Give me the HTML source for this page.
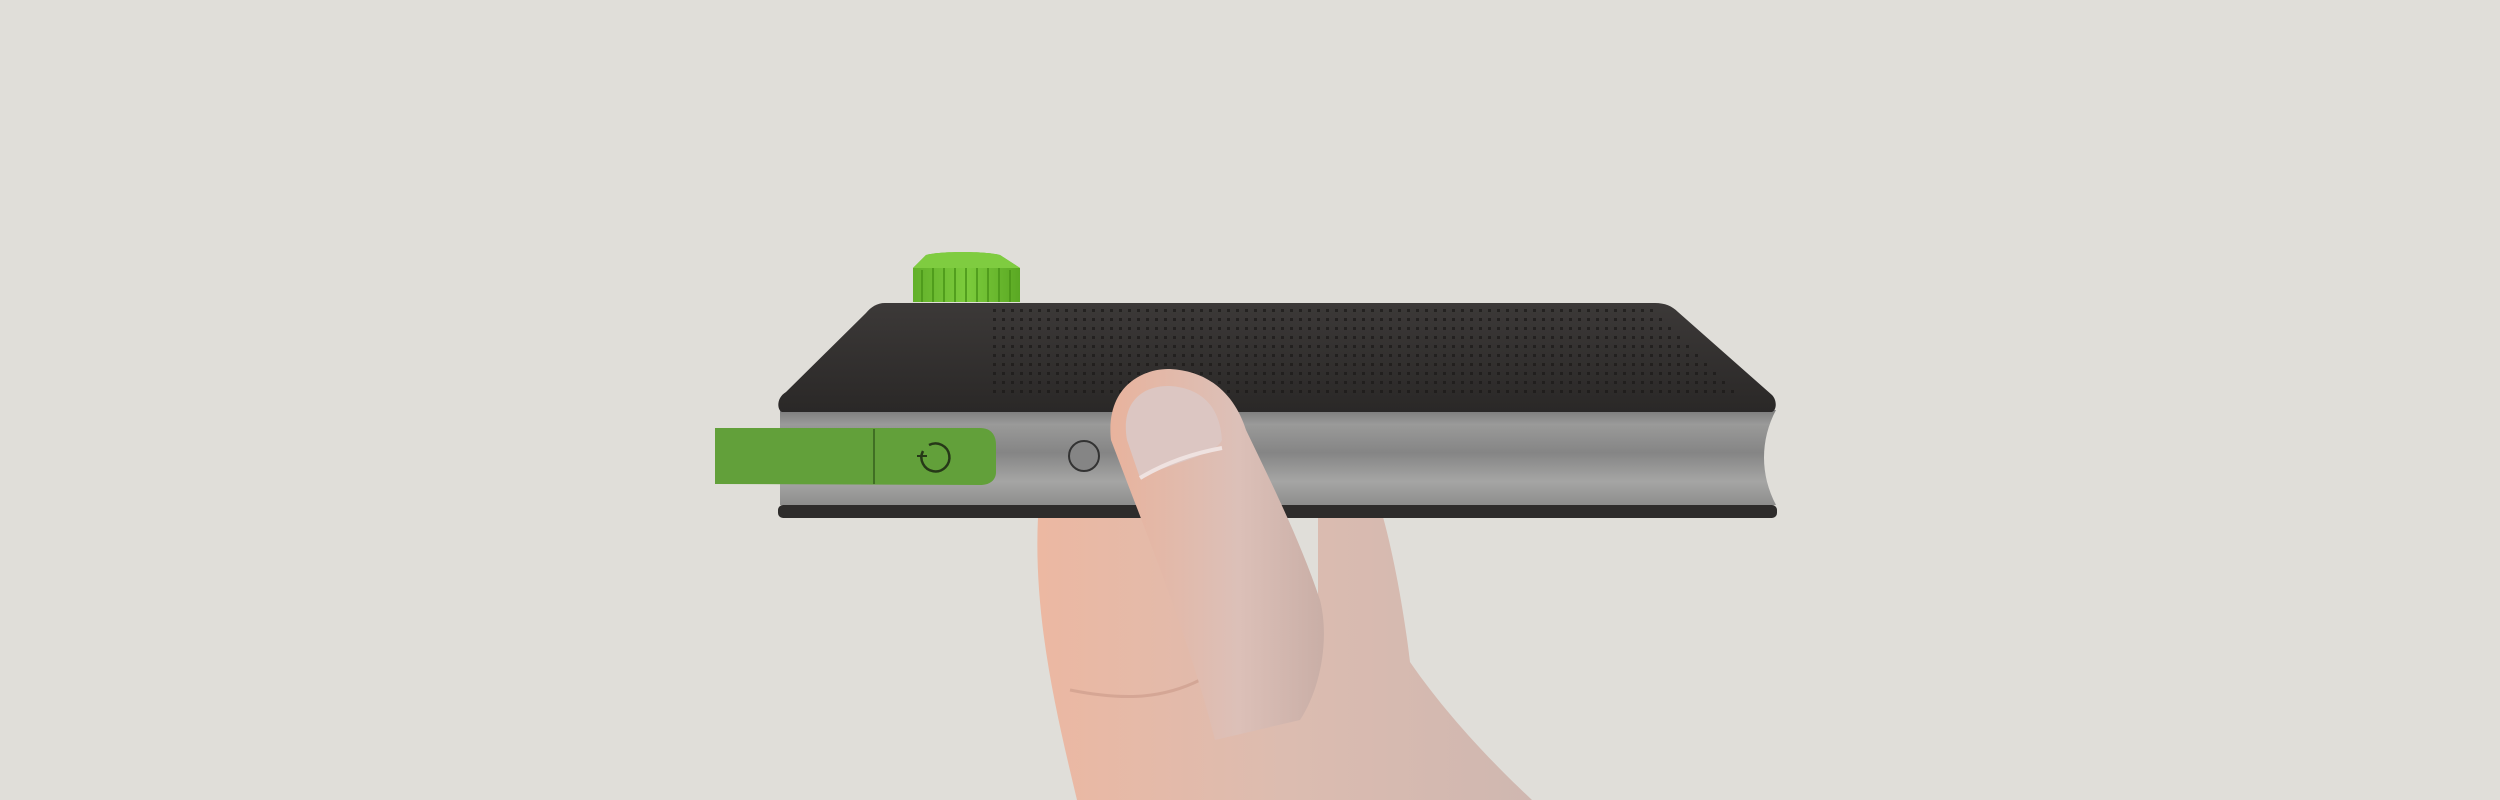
<!DOCTYPE html>
<html><head><meta charset="utf-8"><style>
html,body{margin:0;padding:0;background:#e0ded9;width:2500px;height:800px;overflow:hidden}
svg{display:block}
</style></head><body>
<svg width="2500" height="800" viewBox="0 0 2500 800" xmlns="http://www.w3.org/2000/svg">
<defs>
<linearGradient id="top" x1="0" y1="0" x2="0" y2="1">
<stop offset="0" stop-color="#3c3938"/><stop offset="1" stop-color="#2a2827"/></linearGradient>
<linearGradient id="silver" x1="0" y1="0" x2="0" y2="1">
<stop offset="0" stop-color="#7c7c7c"/><stop offset="0.15" stop-color="#9a9a99"/><stop offset="0.45" stop-color="#858585"/><stop offset="0.75" stop-color="#a5a5a4"/><stop offset="1" stop-color="#8e8e8d"/></linearGradient>
<linearGradient id="knob" x1="0" y1="0" x2="1" y2="0">
<stop offset="0" stop-color="#62b02a"/><stop offset="0.5" stop-color="#7ccc3c"/><stop offset="1" stop-color="#5aa823"/></linearGradient>
<linearGradient id="skin" x1="0" y1="0" x2="1" y2="0">
<stop offset="0" stop-color="#ecb8a2"/><stop offset="0.5" stop-color="#dcbcb0"/><stop offset="1" stop-color="#cfb7b0"/></linearGradient>
<linearGradient id="thumb" x1="0" y1="0" x2="1" y2="0">
<stop offset="0" stop-color="#e8b39d"/><stop offset="0.6" stop-color="#dcc0b8"/><stop offset="1" stop-color="#c9aea6"/></linearGradient>
<pattern id="dots" width="9" height="9" patternUnits="userSpaceOnUse">
<rect x="3" y="3" width="3" height="3" fill="#1c1a19"/></pattern>
<clipPath id="topclip"><path d="M990,306 L1650,306 L1740,395 L990,395 Z"/></clipPath>
</defs>
<path d="M1038,517 L1240,517 L1318,600 L1318,517 L1383,517 C1395,560 1405,620 1410,662 C1450,720 1500,770 1532,800 L1077,800 C1058,720 1033,620 1038,517 Z" fill="url(#skin)"/>
<path d="M1070,690 C1120,700 1160,700 1200,680" stroke="#c99a88" stroke-width="3" fill="none" opacity="0.6"/>
<path d="M913,302 L913,268 L926,255 C940,251 985,251 1000,255 L1020,268 L1020,302 Z" fill="url(#knob)"/>
<path d="M926,255 C940,251 985,251 1000,255 L1020,268 L913,268 Z" fill="#7fcc40"/>
<g stroke="#4a9618" stroke-width="2" opacity="0.8">
<line x1="922" y1="270" x2="922" y2="302"/><line x1="933" y1="268" x2="933" y2="302"/><line x1="944" y1="268" x2="944" y2="302"/><line x1="955" y1="268" x2="955" y2="302"/><line x1="966" y1="268" x2="966" y2="302"/><line x1="977" y1="268" x2="977" y2="302"/><line x1="988" y1="268" x2="988" y2="302"/><line x1="999" y1="268" x2="999" y2="302"/><line x1="1010" y1="270" x2="1010" y2="302"/></g>
<path d="M780,410 L1776,410 C1760,440 1760,475 1776,505 L780,505 Z" fill="url(#silver)"/>
<rect x="778" y="505" width="999" height="13" rx="5" fill="#2e2c2b"/>
<path d="M885,303 L1655,303 C1665,303 1672,306 1678,312 L1772,395 C1777,400 1777,410 1772,412 L782,412 C777,410 776,398 786,392 L866,313 C871,307 877,303 885,303 Z" fill="url(#top)"/>
<rect x="980" y="300" width="800" height="100" fill="url(#dots)" opacity="0.75" clip-path="url(#topclip)"/>
<path d="M715,428 L980,428 C991,428 996,435 996,445 L996,472 C996,480 990,485 980,485 L715,484 Z" fill="#62a03a"/>
<line x1="874" y1="429" x2="874" y2="484" stroke="#355f1c" stroke-width="1.5"/>
<path d="M923,451 A14,14 0 1 0 929,445" stroke="#263818" stroke-width="2.5" fill="none"/>
<line x1="917" y1="456" x2="927" y2="456" stroke="#263818" stroke-width="2"/>
<ellipse cx="1084" cy="456" rx="15" ry="15" fill="#858585" stroke="#333" stroke-width="2"/>
<path d="M1111,440 C1105,385 1145,368 1170,369 C1212,371 1236,398 1246,430 C1270,480 1300,540 1320,600 C1330,640 1320,690 1300,720 L1215,740 C1190,640 1145,530 1111,440 Z" fill="url(#thumb)"/>
<path d="M1127,440 C1120,400 1145,385 1170,386 C1200,388 1220,405 1222,440 C1215,455 1180,460 1140,478 Z" fill="#dcc6c2"/>
<path d="M1140,478 C1170,460 1200,452 1222,448" stroke="#efe2e0" stroke-width="4" fill="none"/>
</svg>
</body></html>
